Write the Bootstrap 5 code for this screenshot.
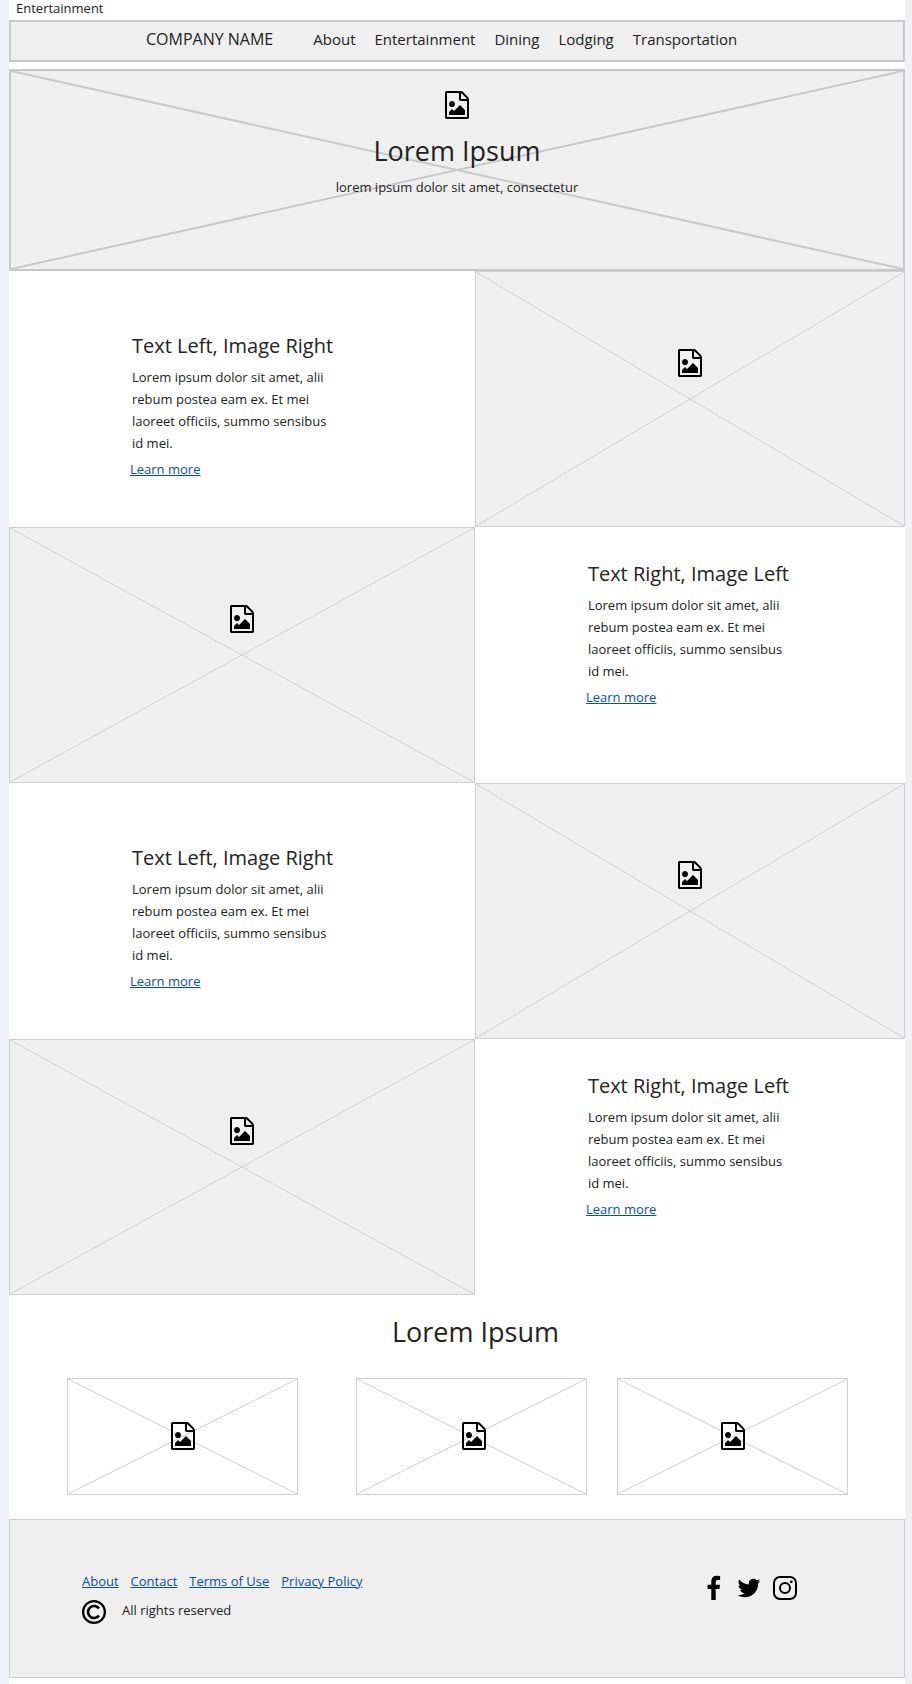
<!DOCTYPE html>
<html lang="en">
<head>
<meta charset="utf-8">
<meta name="viewport" content="width=device-width, initial-scale=1">
<title>Entertainment</title>
<link href="https://cdn.jsdelivr.net/npm/bootstrap@5.3.0/dist/css/bootstrap.min.css" rel="stylesheet">
<style>
  body { background: #f0f1f6; color: #222; font-family: "Open Sans", "Noto Sans", sans-serif; font-size: 13px; line-height: 22px; padding: 0 7px 0 9px; }
  a { color: #0b4fa0; }
  .crumb { line-height: 16px; padding: 0 7px 4px; }
  .panel { background: #efefef; border: 1px solid #cfcfcf; }
  .panel-bold { border: 2px solid #c8c8c8; }
  .site-nav { padding: 5px 134px 9px 135px; margin-bottom: 7px; }
  .site-nav .navbar-brand, .site-nav .navbar-nav .nav-link { font-size: 15px; line-height: 24px; color: #222; padding: 0; }
  .site-nav .navbar-brand { font-size: 16px; margin-right: 40px; }
  .site-nav .navbar-nav { gap: 19px; }
  .cross { position: absolute; inset: 0; width: 100%; height: 100%; stroke: #cfcfcf; stroke-width: 1; }
  .panel-bold .cross { stroke: #c8c8c8; stroke-width: 2; }
  .pic-icon { display: block; position: relative; width: 24px; height: 28px; }
  .hero { min-height: 202px; padding-top: 20px; }
  .big-title { font-size: 27px; line-height: 36px; font-weight: 400; margin: 0; }
  .hero .big-title { margin: 14px 0 7px; }
  .feature { min-height: 256px; }
  .wide-col { flex: 0 0 52%; }
  .pic { padding-top: 77px; }
  .copy-left { padding: 61px 0 0 121px; }
  .copy-right { padding: 33px 0 0 111px; }
  .copy-title { font-size: 20px; line-height: 28px; font-weight: 400; margin: 0 0 6px 2px; }
  .copy-text { width: 206px; margin: 0 0 4px 2px; }
  .gallery { padding: 19px 57px 24px 58px; }
  .gallery .big-title { padding-left: 36px; margin-bottom: 28px; }
  .thumb { flex: 1 1 0; height: 117px; padding-bottom: 2px; border: 1px solid #cfcfcf; }
  .gap-wide { margin-right: 58px; }
  .gap-narrow { margin-right: 30px; }
  .site-footer { min-height: 159px; padding: 50px 107px 50px 72px; margin-bottom: 6px; }
  .foot-links { gap: 12px; margin-bottom: 7px; }
  .social { gap: 12px; padding-top: 5px; }
  .social a { color: #000; display: block; }
  .social svg, .copy-mark { display: block; height: 26px; }
</style>
</head>
<body>
<svg class="d-none" aria-hidden="true">
  <symbol id="file-image" viewBox="0 0 1536 1792"><path d="M1468 380q28 28 48 76t20 88v1152q0 40-28 68t-68 28H96q-40 0-68-28t-28-68V96q0-40 28-68T96 0h896q40 0 88 20t76 48zm-444-244v376h376q-10-29-22-41l-313-313q-12-12-41-22zm384 1528V640H992q-40 0-68-28t-28-68V128H128v1536h1280zm-128-448v320H256v-192l192-192 128 128 384-384zm-832-192q-80 0-136-56t-56-136 56-136 136-56 136 56 56 136-56 136-136 56z"/></symbol>
</svg>

<div class="bg-white overflow-hidden">
  <div class="crumb">Entertainment</div>

  <nav class="navbar navbar-expand panel panel-bold site-nav" aria-label="Main">
    <a class="navbar-brand" href="#">COMPANY NAME</a>
    <div class="navbar-nav">
      <a class="nav-link" href="#">About</a>
      <a class="nav-link" href="#">Entertainment</a>
      <a class="nav-link" href="#">Dining</a>
      <a class="nav-link" href="#">Lodging</a>
      <a class="nav-link" href="#">Transportation</a>
    </div>
  </nav>

  <header class="panel panel-bold hero position-relative d-flex flex-column align-items-center text-center">
    <svg class="cross" aria-hidden="true"><line x1="0" y1="0" x2="100%" y2="100%"/><line x1="100%" y1="0" x2="0" y2="100%"/></svg>
    <svg class="pic-icon" aria-hidden="true"><use href="#file-image"/></svg>
    <h1 class="big-title position-relative">Lorem Ipsum</h1>
    <p class="position-relative mb-0">lorem ipsum dolor sit amet, consectetur</p>
  </header>

  <main>
    <section class="feature d-flex">
      <div class="wide-col copy-left">
        <h2 class="copy-title">Text Left, Image Right</h2>
        <p class="copy-text">Lorem ipsum dolor sit amet, alii rebum postea eam ex. Et mei laoreet officiis, summo sensibus id mei.</p>
        <a href="#">Learn more</a>
      </div>
      <div class="panel pic position-relative flex-fill d-flex justify-content-center">
        <svg class="cross" aria-hidden="true"><line x1="0" y1="0" x2="100%" y2="100%"/><line x1="100%" y1="0" x2="0" y2="100%"/></svg>
        <svg class="pic-icon" aria-hidden="true"><use href="#file-image"/></svg>
      </div>
    </section>

    <section class="feature d-flex">
      <div class="wide-col panel pic position-relative d-flex justify-content-center">
        <svg class="cross" aria-hidden="true"><line x1="0" y1="0" x2="100%" y2="100%"/><line x1="100%" y1="0" x2="0" y2="100%"/></svg>
        <svg class="pic-icon" aria-hidden="true"><use href="#file-image"/></svg>
      </div>
      <div class="flex-fill copy-right">
        <h2 class="copy-title">Text Right, Image Left</h2>
        <p class="copy-text">Lorem ipsum dolor sit amet, alii rebum postea eam ex. Et mei laoreet officiis, summo sensibus id mei.</p>
        <a href="#">Learn more</a>
      </div>
    </section>

    <section class="feature d-flex">
      <div class="wide-col copy-left">
        <h2 class="copy-title">Text Left, Image Right</h2>
        <p class="copy-text">Lorem ipsum dolor sit amet, alii rebum postea eam ex. Et mei laoreet officiis, summo sensibus id mei.</p>
        <a href="#">Learn more</a>
      </div>
      <div class="panel pic position-relative flex-fill d-flex justify-content-center">
        <svg class="cross" aria-hidden="true"><line x1="0" y1="0" x2="100%" y2="100%"/><line x1="100%" y1="0" x2="0" y2="100%"/></svg>
        <svg class="pic-icon" aria-hidden="true"><use href="#file-image"/></svg>
      </div>
    </section>

    <section class="feature d-flex">
      <div class="wide-col panel pic position-relative d-flex justify-content-center">
        <svg class="cross" aria-hidden="true"><line x1="0" y1="0" x2="100%" y2="100%"/><line x1="100%" y1="0" x2="0" y2="100%"/></svg>
        <svg class="pic-icon" aria-hidden="true"><use href="#file-image"/></svg>
      </div>
      <div class="flex-fill copy-right">
        <h2 class="copy-title">Text Right, Image Left</h2>
        <p class="copy-text">Lorem ipsum dolor sit amet, alii rebum postea eam ex. Et mei laoreet officiis, summo sensibus id mei.</p>
        <a href="#">Learn more</a>
      </div>
    </section>

    <section class="gallery">
      <h2 class="big-title text-center">Lorem Ipsum</h2>
      <div class="d-flex">
        <div class="thumb gap-wide position-relative d-flex align-items-center justify-content-center">
          <svg class="cross" aria-hidden="true"><line x1="0" y1="0" x2="100%" y2="100%"/><line x1="100%" y1="0" x2="0" y2="100%"/></svg>
          <svg class="pic-icon" aria-hidden="true"><use href="#file-image"/></svg>
        </div>
        <div class="thumb gap-narrow position-relative d-flex align-items-center justify-content-center">
          <svg class="cross" aria-hidden="true"><line x1="0" y1="0" x2="100%" y2="100%"/><line x1="100%" y1="0" x2="0" y2="100%"/></svg>
          <svg class="pic-icon ms-1" aria-hidden="true"><use href="#file-image"/></svg>
        </div>
        <div class="thumb position-relative d-flex align-items-center justify-content-center">
          <svg class="cross" aria-hidden="true"><line x1="0" y1="0" x2="100%" y2="100%"/><line x1="100%" y1="0" x2="0" y2="100%"/></svg>
          <svg class="pic-icon" aria-hidden="true"><use href="#file-image"/></svg>
        </div>
      </div>
    </section>
  </main>

  <footer class="panel site-footer d-flex justify-content-between align-items-start">
    <div>
      <div class="foot-links d-flex">
        <a href="#">About</a>
        <a href="#">Contact</a>
        <a href="#">Terms of Use</a>
        <a href="#">Privacy Policy</a>
      </div>
      <div class="d-flex">
        <svg class="copy-mark me-3" width="24" viewBox="0 0 24 26" fill="none" stroke="#000" aria-hidden="true"><circle cx="12" cy="13" r="10.900" stroke-width="2.200"/><path d="M17 9.600A6 6 0 1 0 17 16.400" stroke-width="2.600"/></svg>
        <span>All rights reserved</span>
      </div>
    </div>
    <div class="social d-flex">
      <a href="#" aria-label="Facebook"><svg width="20" viewBox="350 -60 1280 1792"><path d="M1343 12v264h-157q-86 0-116 36t-30 108v189h293l-39 296h-254v759H734V905H479V609h255V391q0-186 104-288.500T1115 0q147 0 228 12z"/></svg></a>
      <a href="#" aria-label="Twitter"><svg width="24" viewBox="68 0 1656 1792"><path d="M1684 408q-67 98-162 167 1 14 1 42 0 130-38 259.500T1369.500 1125 1185 1335.500t-258 146-323 54.500q-271 0-496-145 35 4 78 4 225 0 401-138-105-2-188-64.500T285 1033q33 5 61 5 43 0 85-11-112-23-185.500-111.500T172 710v-4q68 38 146 41-66-44-105-115t-39-154q0-88 44-163 121 149 294.500 238.500T884 653q-8-38-8-74 0-134 94.500-228.500T1199 256q140 0 236 102 109-21 205-78-37 115-142 178 93-10 186-50z"/></svg></a>
      <a href="#" aria-label="Instagram"><svg width="24" viewBox="0 0 24 26" fill="none" stroke="#000" stroke-width="2"><rect x="1" y="2" width="22" height="22" rx="6"/><circle cx="12" cy="13" r="5"/><circle cx="18.300" cy="6.800" r="1.400" fill="#000" stroke="none"/></svg></a>
    </div>
  </footer>
</div>
<script src="https://cdn.jsdelivr.net/npm/bootstrap@5.3.0/dist/js/bootstrap.bundle.min.js"></script>
</body>
</html>
